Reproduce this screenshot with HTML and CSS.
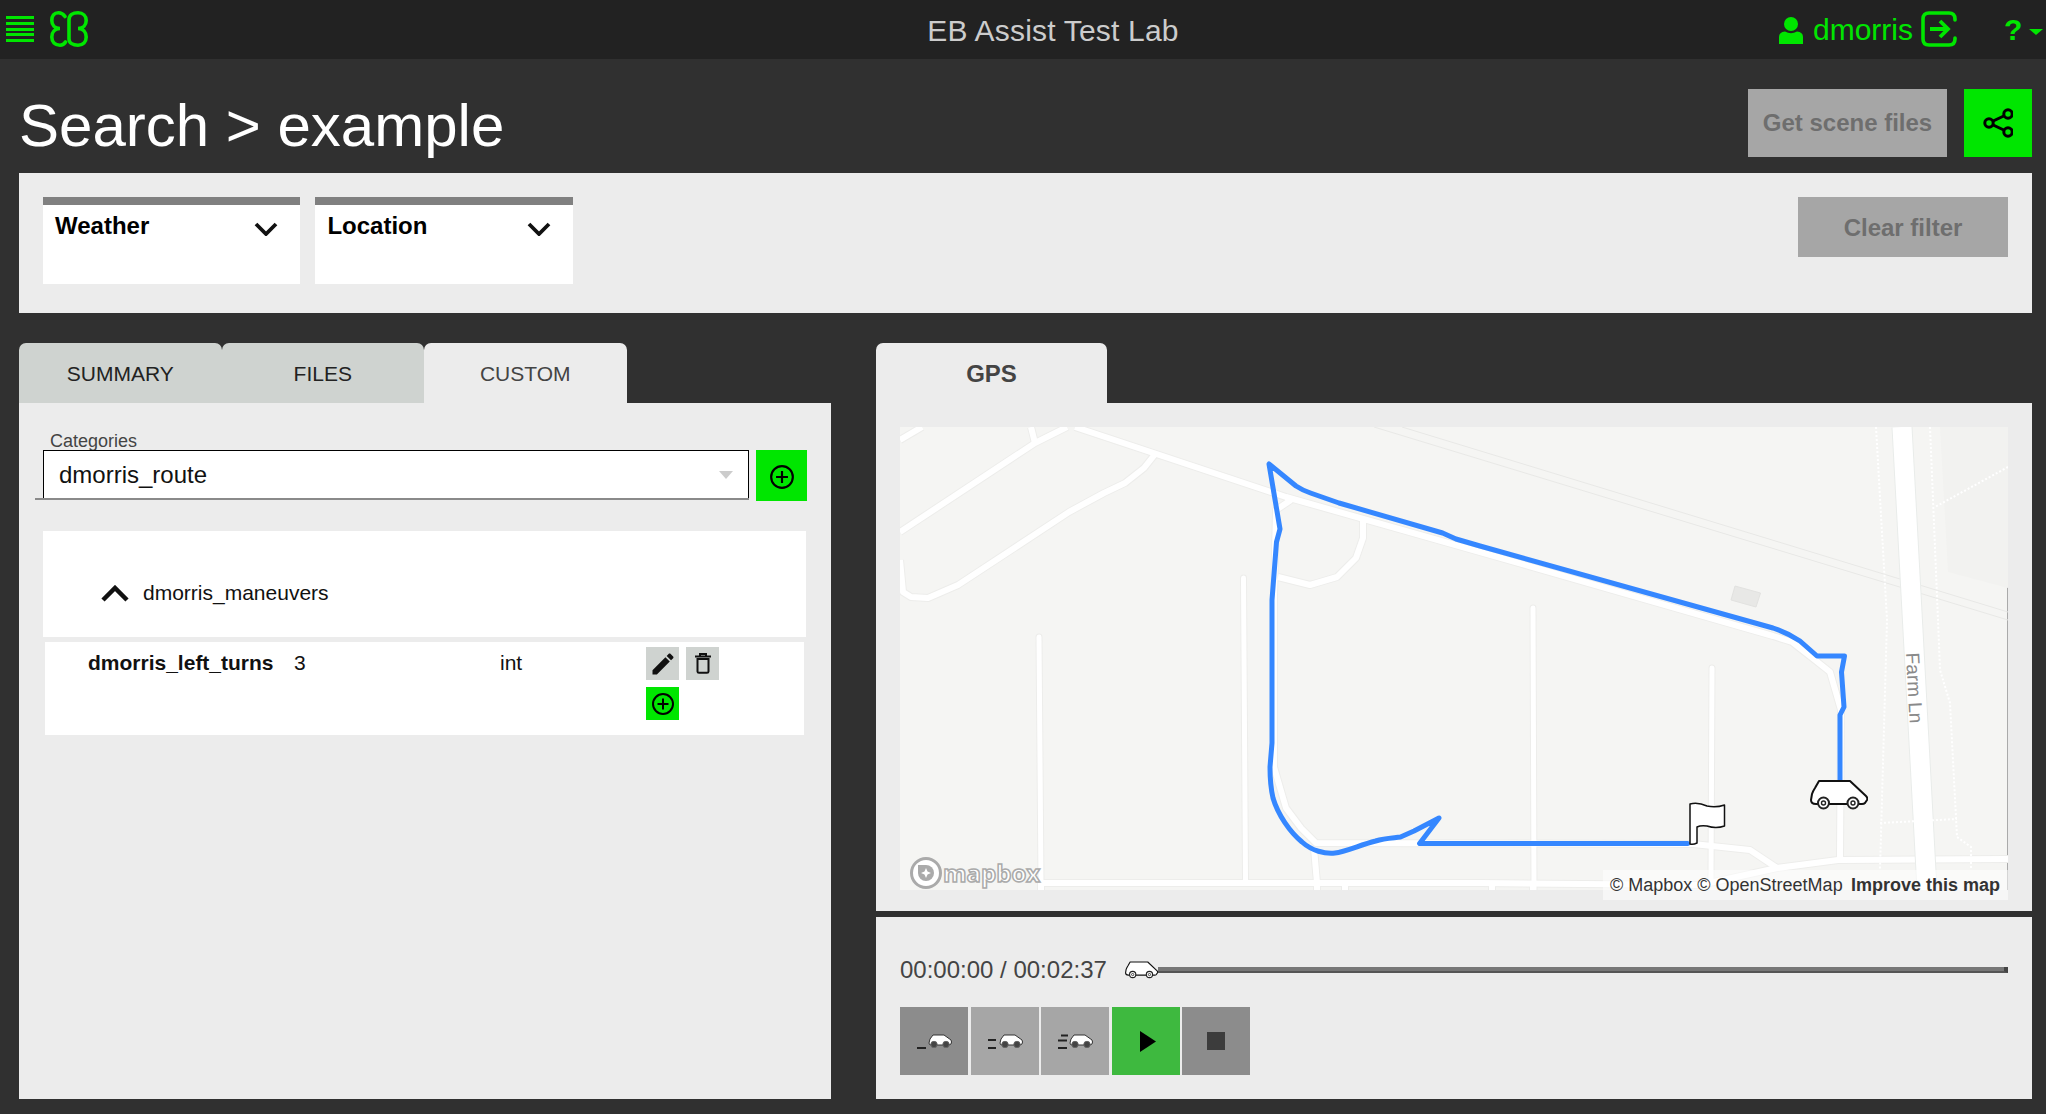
FILE: index.html
```html
<!DOCTYPE html>
<html lang="en">
<head>
<meta charset="utf-8">
<title>EB Assist Test Lab</title>
<link rel="stylesheet" href="styles.css">
</head>
<body>
<svg class="defs" width="0" height="0" aria-hidden="true">
  <defs>
    <symbol id="car" viewBox="0 0 58 30">
      <path class="car-body" d="M9 1H40L56 16Q58 18 57 20L55 23Q54 24 52 24H6Q1 24 1 20L2 14Q3 11 5 8Z"/>
      <circle class="car-wheel" cx="13.5" cy="23" r="5.5"/><circle class="car-hub" cx="13.5" cy="23" r="2"/>
      <circle class="car-wheel" cx="43" cy="23" r="5.5"/><circle class="car-hub" cx="43" cy="23" r="2"/>
    </symbol>
    <symbol id="car-small" viewBox="0 0 24 14">
      <path class="car-small-body" d="M5 1H16L23 6Q24 8 23 10L21 11H3Q1 11 1 9L2 5Z"/>
      <circle class="car-small-wheel" cx="6" cy="10.5" r="3.2"/>
      <circle class="car-small-wheel" cx="18" cy="10.5" r="3.2"/>
    </symbol>
    <symbol id="plus-circle" viewBox="0 0 24 24">
      <circle class="plus-ring" cx="12" cy="12" r="10"/>
      <path class="plus-cross" d="M12 6.5V17.5M6.5 12H17.5"/>
    </symbol>
    <g id="roads-major">
      <path d="M1075 427L1286 497L1480 552L1773 636L1792 642L1815 660L1830 672L1841 710L1840 857"/>
      <path d="M900 532L1035 443L1067 427"/>
      <path d="M1031 427L1035 443"/>
      <path d="M900 440L922 427"/>
      <path d="M1156 453L1144 468L1125 483L1104 493L1069 512L958 585L928 598L911 597L903 592L900 560"/>
      <path d="M1363 520V538L1356 558L1337 577L1310 585L1278 577"/>
      <path d="M1291 500L1276 510L1274 597V767L1286 808L1301 828L1316 843L1693 844L1750 850L1777 868L1838 860L2008 859"/>
      <path d="M1314 848L1317 883"/>
      <path d="M1039 883H1480L1700 885L1777 868"/>
      <path d="M1041 883V890M1345 883V890M1492 883V890M1533 883V890M1317 883V890"/>
    </g>
    <g id="roads-minor">
      <path d="M1039 637L1041 883"/>
      <path d="M1243.500 578L1245.500 880"/>
      <path d="M1533 608L1534 890"/>
      <path d="M1712 668L1711 880"/>
    </g>
  </defs>
</svg>

<header class="topbar">
  <div class="brand">
    <svg class="menu-icon" viewBox="0 0 28 26"><path d="M0 0H28V3H0ZM0 6H28V9H0ZM0 12H28V15H0ZM0 17H28V20H0ZM0 23H28V26H0Z"/></svg>
    <svg class="logo" viewBox="50 11 38 36"><path d="M65 16.500C63 13.500 60.500 12.800 58.500 12.800C54 12.800 51.800 16 51.800 20.500C51.800 25 55 28.500 60 28.500C55 28.500 51.800 32 51.800 37C51.800 42 55 45.200 60 45.200C62 45.200 64 44.500 65.500 42M69 39V20C69 15 73 12.800 78 12.800C83 12.800 86.200 16 86.200 20.500C86.200 25 83 28.500 78 28.500C83 28.500 86.200 32 86.200 37C86.200 42 83 45.200 78 45.200C73 45.200 69 43 69 39Z"/></svg>
  </div>
  <div class="app-title">EB Assist Test Lab</div>
  <div class="user">
    <svg class="user-icon" viewBox="0 0 24 27"><circle cx="12" cy="7" r="7"/><path d="M0 27V20Q0 15 6 14.500Q12 18 18 14.500Q24 15 24 20V27Z"/></svg>
    <span class="user-name">dmorris</span>
    <svg class="exit-icon" viewBox="0 0 36 36"><path class="exit-box" d="M34 9V8Q34 2 28 2H8Q2 2 2 8V28Q2 34 8 34H28Q34 34 34 28V27"/><path class="exit-arrow" d="M9 18H27M19 10L27 18L19 26"/></svg>
    <span class="help">?</span>
    <span class="caret"></span>
  </div>
</header>

<div class="title-row">
  <h1 class="page-title">Search &gt; example</h1>
  <div class="title-actions">
    <button class="btn-disabled btn-scene">Get scene files</button>
    <button class="btn-share" aria-label="Share">
      <svg viewBox="0 0 30 30"><path class="share-lines" d="M25 6L6 15L25 24"/><circle class="share-node" cx="25" cy="6" r="4.200"/><circle class="share-node" cx="6" cy="15" r="4.200"/><circle class="share-node" cx="25" cy="24" r="4.200"/></svg>
    </button>
  </div>
</div>

<section class="filters">
  <div class="filter">
    <span>Weather</span>
    <svg class="chev-down" viewBox="0 0 24 14"><path d="M2 2L12 12L22 2"/></svg>
  </div>
  <div class="filter">
    <span>Location</span>
    <svg class="chev-down" viewBox="0 0 24 14"><path d="M2 2L12 12L22 2"/></svg>
  </div>
  <button class="btn-disabled btn-clear">Clear filter</button>
</section>

<main class="columns">
  <section class="col-left">
    <nav class="tabs">
      <div class="tab">SUMMARY</div>
      <div class="tab">FILES</div>
      <div class="tab tab-active">CUSTOM</div>
    </nav>
    <div class="panel-left">
      <div class="field-label">Categories</div>
      <div class="field-row">
        <div class="select-line">
          <div class="select">
            <span>dmorris_route</span>
            <span class="select-arrow"></span>
          </div>
        </div>
        <button class="btn-add-large" aria-label="Add category"><svg><use href="#plus-circle"/></svg></button>
      </div>
      <div class="group-head">
        <svg class="chev-up" viewBox="0 0 30 17"><path d="M3 15L15 3L27 15"/></svg>
        <span>dmorris_maneuvers</span>
      </div>
      <div class="group-row">
        <div class="cell-name">dmorris_left_turns</div>
        <div class="cell">3</div>
        <div class="cell">int</div>
        <div class="row-actions">
          <button class="btn-row" aria-label="Edit"><svg class="icon-edit" viewBox="0 0 24 24"><path d="M3 17.250V21h3.750L17.810 9.940l-3.750-3.750L3 17.250zM20.710 7.040c.39-.39.39-1.020 0-1.410l-2.340-2.340c-.39-.39-1.020-.39-1.410 0l-1.830 1.830 3.750 3.750 1.830-1.830z"/></svg></button>
          <button class="btn-row" aria-label="Delete"><svg class="icon-trash" viewBox="0 0 16 21"><path d="M0 3.500H16M5 3V1H11V3M2.500 6V18.500Q2.500 19.800 4 19.800H12Q13.500 19.800 13.500 18.500V6Z"/></svg></button>
          <button class="btn-row btn-row-add" aria-label="Add"><svg><use href="#plus-circle"/></svg></button>
        </div>
      </div>
    </div>
  </section>

  <section class="col-right">
    <nav class="tabs">
      <div class="tab tab-active tab-gps">GPS</div>
    </nav>
    <div class="panel-map">
      <div class="map">
        <svg class="map-svg" viewBox="900 427 1108 463">
          <path class="map-shade" d="M1940 427H2008V588L1948 572Z"/>
          <path class="map-building" d="M1735 586L1760.500 593L1756 607L1731 600Z"/>
          <path class="map-thin" d="M1374 427L2008 620M1402 427L2008 612"/>
          <use href="#roads-major" class="casing-major"/>
          <use href="#roads-minor" class="casing-minor"/>
          <use href="#roads-major" class="road-major"/>
          <use href="#roads-minor" class="road-minor"/>
          <path class="farm-casing" d="M1902 427L1927 890"/>
          <path class="farm-road" d="M1902 427L1927 890"/>
          <path class="map-path" d="M1876 427L1887 620L1880 870M1930 427L1938 620L1940 670L1950 703L1957 837L1971 847V868M1880 823L1957 819M2008 467L1935 507"/>
          <text class="road-label" transform="translate(1906 653) rotate(87)">Farm Ln</text>
          <path class="route" d="M1840 782V715L1844 707L1841.500 672L1844.500 656H1817L1800 641Q1788 633 1773 628L1480 546L1456 539L1442.600 533L1339 503L1310.500 493Q1302 490 1296 486L1269 464L1280 529L1276.500 542L1272 600V743L1270 767Q1270 785 1273 798C1278 815 1290 832 1302 842C1312 851 1325 854 1335 853C1345 852 1360 845 1375.600 841C1385 838 1393 838 1400.500 837L1414 831L1439 818L1419.600 843.500H1687.500"/>
          <path class="flag" d="M1690 844V804Q1698 802 1707 806Q1716 808 1724.500 805V826Q1716 829 1707 826Q1701 825 1697 827V843Q1693 845 1690 844Z"/>
          <use href="#car" x="1810" y="780" width="58" height="30"/>
        </svg>
        <div class="mapbox-logo">
          <svg viewBox="0 0 136 36" width="136" height="36">
            <circle class="logo-ring" cx="16" cy="17" r="14.500"/>
            <path class="logo-pin" d="M16 9A8 8 0 1 1 8 17V9Z"/>
            <path class="logo-star" d="M16 12L17.500 15.500L21 17L17.500 18.500L16 22L14.500 18.500L11 17L14.500 15.500Z"/>
            <text class="logo-text" x="33" y="26">mapbox</text>
          </svg>
        </div>
        <div class="attribution"><span>© Mapbox © OpenStreetMap</span> <strong>Improve this map</strong></div>
      </div>
    </div>
    <div class="panel-controls">
      <div class="timeline">
        <span class="time">00:00:00 / 00:02:37</span>
        <svg class="slider-car"><use href="#car"/></svg>
        <div class="slider"></div>
      </div>
      <div class="transport">
        <button class="t-btn t-dark" aria-label="Slow"><svg viewBox="0 0 68 68"><path class="dash" d="M17 41H26"/><use href="#car-small" x="28" y="27" width="24" height="14"/></svg></button>
        <button class="t-btn" aria-label="Normal"><svg viewBox="0 0 68 68"><path class="dash" d="M17 33H25M17 41H25"/><use href="#car-small" x="28" y="27" width="24" height="14"/></svg></button>
        <button class="t-btn" aria-label="Fast"><svg viewBox="0 0 68 68"><path class="dash" d="M20 28.500H27M17 33.500H26M17 41H26"/><use href="#car-small" x="28" y="27" width="24" height="14"/></svg></button>
        <button class="t-btn t-play" aria-label="Play"><svg viewBox="0 0 68 68"><path class="play" d="M28 24L44 34.500L28 45Z"/></svg></button>
        <button class="t-btn t-dark" aria-label="Stop"><svg viewBox="0 0 68 68"><rect class="stop" x="25" y="25" width="18" height="18"/></svg></button>
      </div>
    </div>
  </section>
</main>
</body>
</html>
```
FILE: styles.css
```css
* { box-sizing: border-box; }
html, body { margin: 0; padding: 0; }
body {
  height: 1114px;
  overflow: hidden;
  background: #303030;
  font-family: "Liberation Sans", Arial, sans-serif;
  color: #000;
}
button { border: 0; padding: 0; margin: 0; font-family: inherit; cursor: pointer; }
.defs { position: absolute; }

/* top bar */
.topbar {
  height: 59px;
  background: #222;
  display: flex;
  align-items: center;
  color: #00e600;
}
.brand { display: flex; align-items: center; padding-left: 6px; width: 88px; }
.menu-icon { width: 28px; height: 26px; fill: #00e600; margin-top: -2px; }
.logo { width: 38px; height: 36px; margin-left: 16px; margin-top: -1px; fill: none; stroke: #00e600; stroke-width: 3.6; stroke-linecap: round; }
.app-title { flex: 1; text-align: center; font-size: 30px; color: #ccc; padding-left: 239px; margin-top: 3px; letter-spacing: 0.2px; }
.user { display: flex; align-items: center; width: 267px; }
.user-icon { width: 24px; height: 27px; fill: #00e600; margin-top: 1px; }
.user-name { font-size: 30px; margin-left: 10px; margin-top: 1px; }
.exit-icon { width: 36px; height: 36px; margin-left: 8px; margin-top: -1px; fill: none; stroke: #00e600; stroke-width: 3.600; stroke-linecap: round; }
.exit-arrow { stroke-width: 3.800; stroke-linecap: butt; }
.help { font-size: 30px; font-weight: bold; margin-left: 47px; margin-top: 1px; }
.caret { width: 0; height: 0; margin-left: 7px; margin-top: 4px; border-left: 7px solid transparent; border-right: 7px solid transparent; border-top: 6px solid #00e600; }

/* title row */
.title-row {
  display: flex;
  align-items: flex-start;
  justify-content: space-between;
  padding: 30px 14px 0 19px;
  height: 114px;
}
.page-title { margin: 0; font-size: 60px; font-weight: normal; color: #fff; line-height: 68px; margin-top: 3px; }
.title-actions { display: flex; gap: 17px; }
.btn-disabled { background: #a6a6a6; color: #6e6e6e; font-size: 24px; font-weight: bold; }
.btn-scene { width: 199px; height: 68px; }
.btn-share { width: 68px; height: 68px; background: #00e600; display: flex; align-items: center; justify-content: center; }
.btn-share svg { width: 30px; height: 30px; fill: none; stroke: #000; stroke-width: 3; }
.share-node { fill: #00e600; }

/* filters */
.filters {
  margin: 0 14px 0 19px;
  height: 140px;
  background: #ececec;
  display: flex;
  align-items: flex-start;
  padding: 24px 24px 0;
  gap: 15px;
}
.filter {
  width: 257.400px;
  height: 87px;
  background: #fff;
  border-top: 8px solid #808080;
  display: flex;
  justify-content: space-between;
  align-items: flex-start;
  padding: 7px 22px 0 12px;
  font-size: 24px;
  font-weight: bold;
}
.chev-down { width: 24px; height: 14px; margin-top: 10px; fill: none; stroke: #111; stroke-width: 3.800; }
.btn-clear { width: 210px; height: 60px; margin-left: auto; padding-top: 2px; }

/* columns */
.columns {
  display: grid;
  grid-template-columns: 812px 1156px;
  column-gap: 45px;
  padding: 30px 14px 0 19px;
}
.tabs { display: flex; height: 60px; }
.tab {
  width: 202.500px;
  height: 60px;
  background: #cfd3d0;
  border-radius: 7px 7px 0 0;
  display: flex;
  align-items: center;
  justify-content: center;
  font-size: 21px;
  color: #222;
  padding-top: 2px;
}
.tab-active { background: #ececec; color: #444; }
.tab-gps { width: 231px; font-size: 24px; font-weight: bold; }

/* left panel */
.panel-left {
  height: 696px;
  background: #ececec;
  padding: 29px 24px 0;
}
.field-label { font-size: 18px; line-height: 18px; color: #444; padding-left: 7px; }
.field-row { display: flex; gap: 7px; align-items: flex-start; }
.select-line { margin-left: -8px; padding-left: 8px; border-bottom: 2px solid #8a8a8a; }
.select {
  width: 706px;
  height: 48px;
  background: #fff;
  border: 1px solid #000;
  border-bottom: 0;
  display: flex;
  align-items: center;
  justify-content: space-between;
  padding: 1px 15px 0;
  font-size: 24px;
  color: #111;
}
.select-arrow { width: 0; height: 0; border-left: 7px solid transparent; border-right: 7px solid transparent; border-top: 8px solid #ccc; }
.btn-add-large { width: 51px; height: 51px; background: #00e600; display: flex; align-items: center; justify-content: center; padding-top: 2px; }
.btn-add-large svg { width: 26px; height: 26px; }
.plus-ring, .plus-cross { fill: none; stroke: #000; stroke-width: 2; }
.group-head {
  margin-top: 30px;
  width: 763px;
  height: 106px;
  background: #fff;
  display: flex;
  align-items: center;
  padding: 18px 0 0 57px;
  font-size: 21px;
  color: #111;
}
.chev-up { width: 30px; height: 17px; margin-right: 13px; fill: none; stroke: #111; stroke-width: 4.500; }
.group-row {
  margin: 5px 0 0 2px;
  width: 759px;
  height: 93px;
  background: #fff;
  display: grid;
  grid-template-columns: 206px 206px 146px 1fr;
  padding: 5px 0 0 43px;
  font-size: 21px;
  color: #111;
}
.cell-name { font-weight: bold; padding-top: 4px; }
.cell { padding-top: 4px; }
.row-actions { display: flex; flex-wrap: wrap; gap: 7px; width: 80px; align-content: flex-start; }
.btn-row { width: 33px; height: 33px; background: #cfd3d0; display: flex; align-items: center; justify-content: center; }
.btn-row-add { background: #00e600; }
.btn-row-add svg { width: 24px; height: 24px; }
.icon-edit { width: 28px; height: 28px; fill: #111; }
.icon-trash { width: 16px; height: 21px; fill: none; stroke: #111; stroke-width: 2; }

/* map panel */
.panel-map {
  height: 508px;
  background: #ececec;
  padding: 24px 24px 0;
}
.map { position: relative; width: 1108px; height: 463px; background: #f5f5f3; border-right: 1px solid #aaa; }
.map-svg { display: block; width: 1108px; height: 463px; fill: none; }
.map-shade { fill: #f2f2f0; }
.map-building { fill: #e8e8e6; stroke: #e2e2e0; }
.map-thin { stroke: #e8e8e6; stroke-width: 1; }
.casing-major { stroke: #ededeb; stroke-width: 8; stroke-linejoin: round; }
.casing-minor { stroke: #ededeb; stroke-width: 7; stroke-linecap: round; }
.road-major { stroke: #fff; stroke-width: 6; stroke-linejoin: round; }
.road-minor { stroke: #fff; stroke-width: 5; stroke-linecap: round; }
.farm-casing { stroke: #e9ecea; stroke-width: 21; }
.farm-road { stroke: #fff; stroke-width: 19; }
.map-path { stroke: #fff; stroke-width: 2; stroke-dasharray: 2 2; }
.road-label { fill: #8a8a8a; font-size: 19px; font-family: "Liberation Sans", Arial, sans-serif; }
.route { stroke: #3587ff; stroke-width: 5; stroke-linejoin: round; stroke-linecap: round; }
.flag { fill: #fff; stroke: #111; stroke-width: 1.500; stroke-linejoin: round; }
.car-body { fill: #fff; stroke: #111; stroke-width: 2; stroke-linejoin: round; }
.car-wheel { fill: #fff; stroke: #222; stroke-width: 2; }
.car-hub { fill: #fff; stroke: #222; stroke-width: 1.400; }
.car-small-body { fill: #fff; stroke: #333; stroke-width: 1; }
.car-small-wheel { fill: #444; stroke: #666; stroke-width: 1; }

.mapbox-logo { position: absolute; left: 10px; bottom: -2px; line-height: 0; }
.logo-ring { fill: #fff; stroke: #aaa; stroke-width: 3; }
.logo-pin { fill: #aaa; }
.logo-star { fill: #fff; }
.logo-text { font-family: "Open Sans", sans-serif; font-size: 24px; font-weight: bold; fill: #fff; stroke: #aaa; stroke-width: 1.500; }
.attribution {
  position: absolute;
  right: -1px;
  bottom: -10px;
  width: 405px;
  height: 30px;
  padding: 0 8px 0 7px;
  background: rgba(255, 255, 255, 0.5);
  display: flex;
  align-items: center;
  justify-content: space-between;
  font-size: 18px;
  color: #333;
  white-space: nowrap;
}

/* controls */
.panel-controls {
  margin-top: 6px;
  height: 182px;
  background: #ececec;
  padding: 40px 24px 0;
}
.timeline { display: flex; align-items: center; height: 26px; }
.time { font-size: 24px; color: #444; width: 225px; flex: none; }
.slider-car { width: 33px; height: 18px; flex: none; }
.slider { flex: 1; height: 6px; background: #777; border-bottom: 2px solid #555; border-right: 4px solid #444; }
.transport { display: flex; gap: 2.500px; margin-top: 24px; }
.t-btn { width: 68px; height: 68px; background: #a6a6a6; display: block; }
.t-btn svg { display: block; width: 68px; height: 68px; }
.t-dark { background: #8c8c8c; }
.t-play { background: #3eb93f; }
.dash { stroke: #222; stroke-width: 2; fill: none; }
.play { fill: #000; }
.stop { fill: #3c3c3c; }
```
